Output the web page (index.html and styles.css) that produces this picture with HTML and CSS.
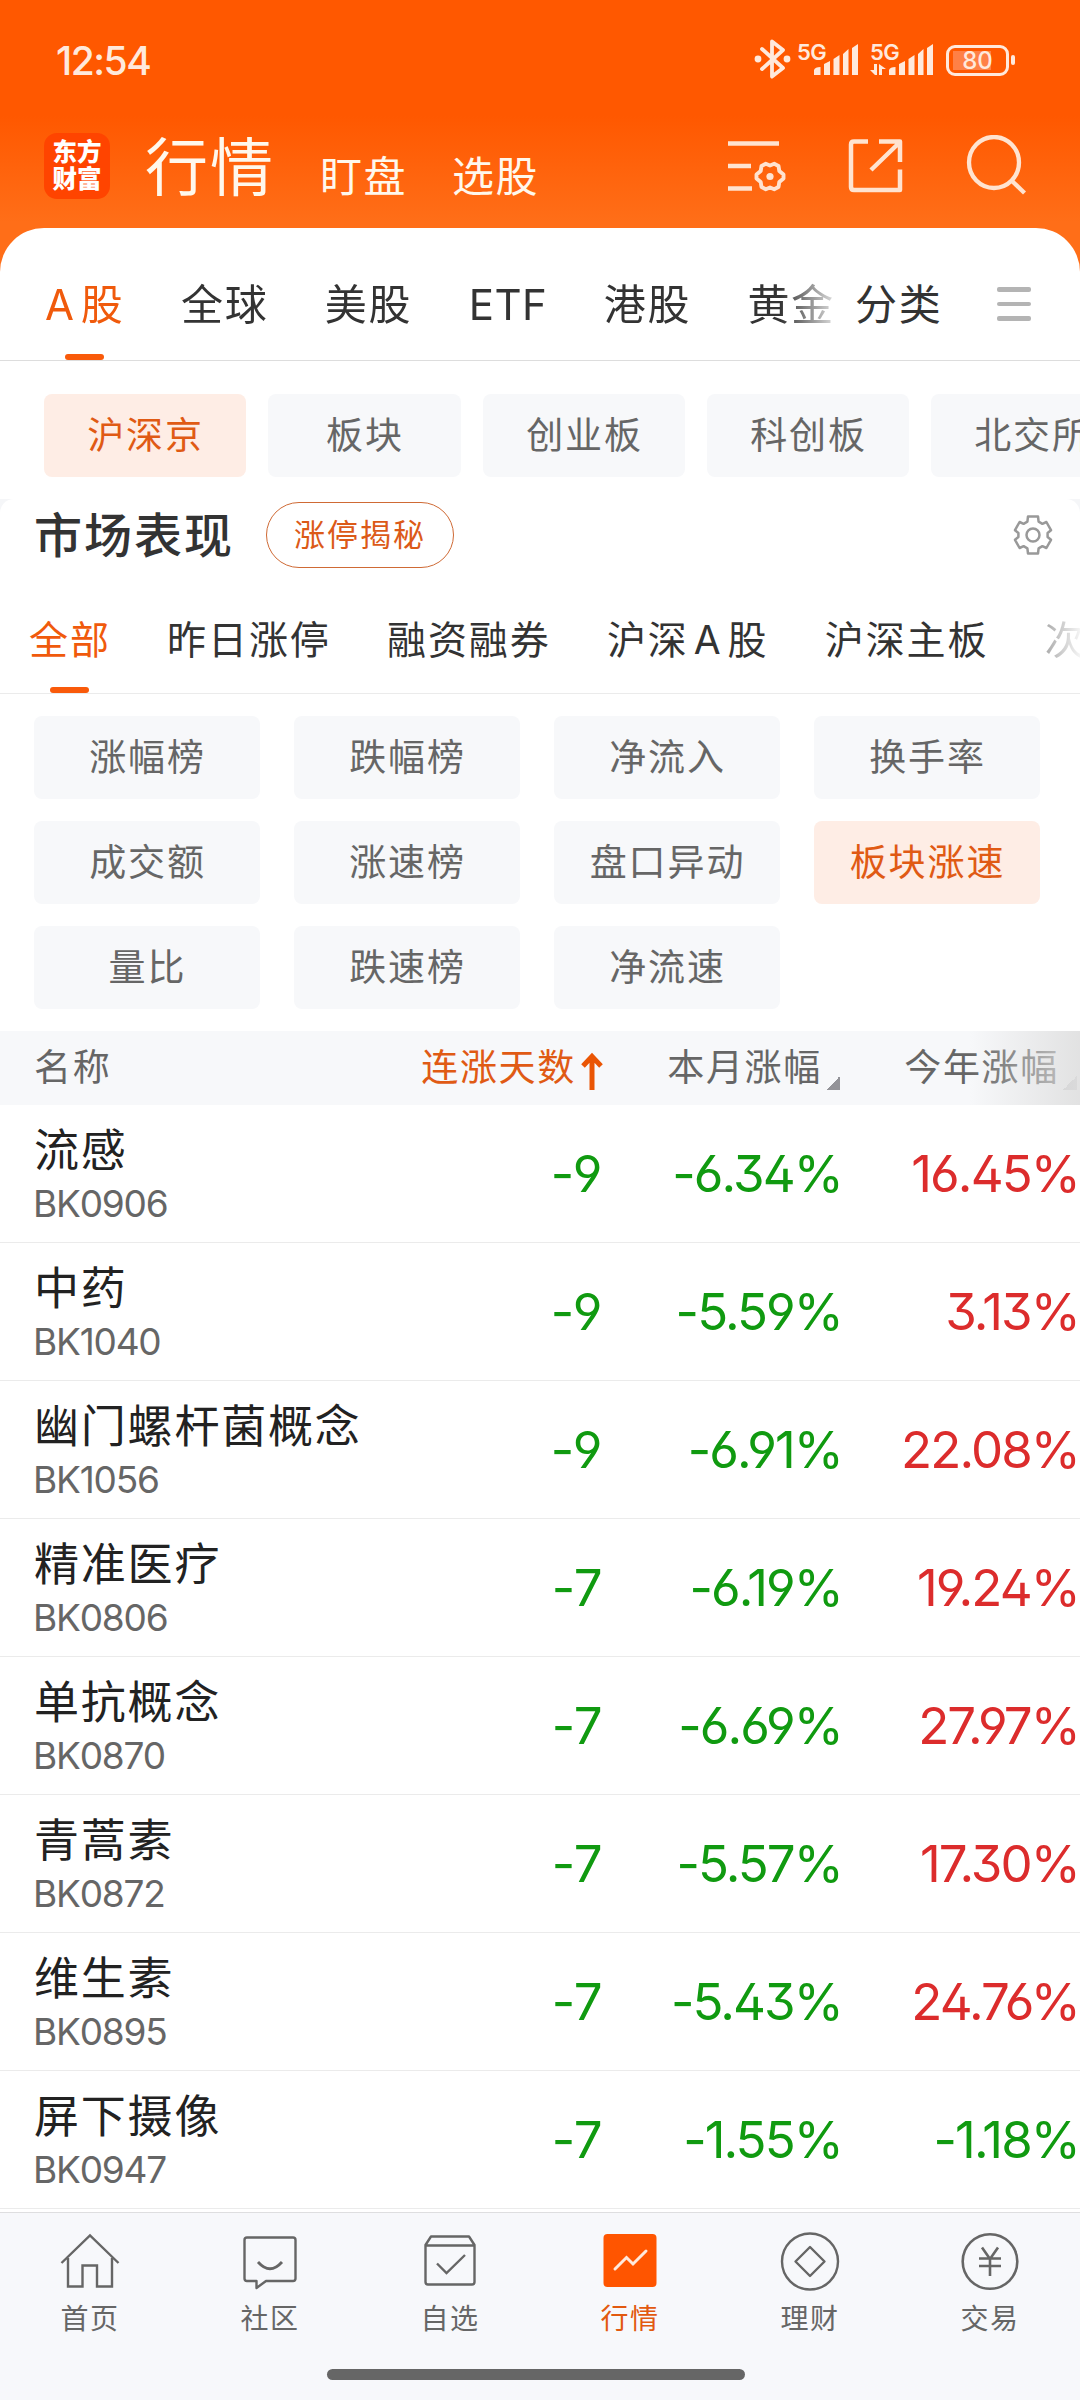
FILE: index.html
```html
<!DOCTYPE html>
<html lang="zh-CN">
<head>
    <meta charset="UTF-8">
    <meta name="viewport" content="width=device-width, initial-scale=1.0">
    <title>行情</title>
    <link rel="stylesheet" href="styles.css">
</head>
<body>

<header class="header">
    <div class="status-bar">
        <span class="clock">12:54</span>
        <div class="status-icons">
            <svg class="bluetooth" width="38" height="40" viewBox="0 0 38 40"><path d="M8 10 L29 29 L18 37.5 V2.500 L29 11 L8 30" fill="none" stroke="#ffe9dc" stroke-width="3.800" stroke-linejoin="round" stroke-linecap="round"/><circle cx="4" cy="20" r="3.400" fill="#ffe9dc"/><circle cx="33" cy="20" r="3.400" fill="#ffe9dc"/></svg>
            <div class="signal">
                <span class="net">5G</span>
                <svg width="66" height="36" viewBox="0 0 66 36"><path d="M20 36v-5q1-3 6.500-3v8zM30 36V25l6-3v14zM39.500 36V20l6-4v20zM49 36V15l5.500-5v26zM58 36V9l6-4v31z" fill="#ffe9dc"/></svg>
            </div>
            <div class="signal second">
                <span class="net">5G</span>
                <svg width="66" height="36" viewBox="0 0 66 36"><path d="M20 36v-5q1-3 6.500-3v8zM30 36V25l6-3v14zM39.500 36V20l6-4v20zM49 36V15l5.500-5v26zM58 36V9l6-4v31zM5 25h3v11H6l-5-5h4zM10 25l7 5h-4v6h-3z" fill="#ffe9dc"/></svg>
            </div>
            <div class="battery"><span>80</span></div>
        </div>
    </div>
    <div class="title-bar">
        <div class="logo">东方<br>财富</div>
        <h1>行情</h1>
        <span class="title-link">盯盘</span>
        <span class="title-link">选股</span>
        <div class="title-icons">
            <svg width="60" height="60" viewBox="0 0 60 60" fill="none" stroke="#ffe3d0" stroke-width="4.500"><path d="M0 8.500h51M0 31h23M0 53.500h24"/><path d="M42 30.500L46.200 28.800L50.500 31L51.300 36L55.500 39.500V43.500L51.300 47L50.500 52L46.200 54.200L42 52.500L37.800 54.200L33.500 52L32.700 47L28.500 43.500V39.500L32.700 36L33.500 31L37.800 28.800Z" stroke-width="3.900" stroke-linejoin="round"/><circle cx="42" cy="41.500" r="3.600" fill="#ffe3d0" stroke="none"/></svg>
            <svg width="58" height="60" viewBox="0 0 58 60" fill="none" stroke="#ffe3d0" stroke-width="4.500"><path d="M20 6.500H6q-3 0-3 3V52q0 3 3 3H52V34.500M31 6.500H52V27M23 35L51 8" stroke-linejoin="round"/></svg>
            <svg width="62" height="60" viewBox="0 0 62 60" fill="none" stroke="#ffe3d0" stroke-width="4.300"><ellipse cx="28" cy="27.500" rx="25" ry="25.500"/><path d="M45.500 45.500L58.500 58"/></svg>
        </div>
    </div>
</header>

<main class="sheet">
    <nav class="market-tabs">
        <div class="market-scroll">
            <span class="tab active">A<i class="thin"></i>股</span>
            <span class="tab">全球</span>
            <span class="tab">美股</span>
            <span class="tab etf">ETF</span>
            <span class="tab">港股</span>
            <span class="tab">黄金</span>
        </div>
        <span class="tab category">分类</span>
        <div class="burger"><i></i><i></i><i></i></div>
    </nav>

    <div class="board-chips">
        <span class="chip active">沪深京</span>
        <span class="chip narrow">板块</span>
        <span class="chip">创业板</span>
        <span class="chip">科创板</span>
        <span class="chip">北交所</span>
    </div>

    <div class="section-wrap">
    <section class="section">
        <div class="section-head">
            <h2>市场表现</h2>
            <span class="pill">涨停揭秘</span>
            <svg class="gear" width="42" height="44" viewBox="0 0 42 44" fill="none" stroke="#999" stroke-width="2.500" stroke-linejoin="round"><path d="M16 3.500H26L26.600 8.600L30.400 10.800L34.400 9L39 17.200L35.600 20V24L39 26.800L34.400 35L30.400 33.200L26.600 35.400L26 40.500H16L15.400 35.400L11.600 33.200L7.600 35L3 26.800L6.400 24V20L3 17.200L7.600 9L11.600 10.800L15.400 8.600Z"/><circle cx="21" cy="22" r="6.500"/></svg>
        </div>

        <nav class="sub-tabs">
            <span class="tab active">全部</span>
            <span class="tab">昨日涨停</span>
            <span class="tab">融资融券</span>
            <span class="tab">沪深<i class="thin"></i>A<i class="thin"></i>股</span>
            <span class="tab">沪深主板</span>
            <span class="tab">次</span>
        </nav>

        <div class="rank-grid">
            <span class="chip">涨幅榜</span>
            <span class="chip">跌幅榜</span>
            <span class="chip">净流入</span>
            <span class="chip">换手率</span>
            <span class="chip">成交额</span>
            <span class="chip">涨速榜</span>
            <span class="chip">盘口异动</span>
            <span class="chip active">板块涨速</span>
            <span class="chip">量比</span>
            <span class="chip">跌速榜</span>
            <span class="chip">净流速</span>
        </div>
    </section>
    </div>

    <div class="table">
        <div class="thead">
            <span class="th-name">名称</span>
            <span class="th sorted">连涨天数<svg width="22" height="40" viewBox="0 0 22 40" fill="none" stroke="#ea5504" stroke-width="5"><path d="M11 39V5M2 15L11 5.500L20 15"/></svg></span>
            <span class="th">本月涨幅<i class="corner"></i></span>
            <span class="th last">今年涨幅<i class="corner"></i></span>
        </div>
        <div class="row">
            <div class="stock"><b>流感</b><small>BK0906</small></div>
            <span class="num days down">-9</span>
            <span class="num down">-6.34%</span>
            <span class="num up">16.45%</span>
        </div>
        <div class="row">
            <div class="stock"><b>中药</b><small>BK1040</small></div>
            <span class="num days down">-9</span>
            <span class="num down">-5.59%</span>
            <span class="num up">3.13%</span>
        </div>
        <div class="row">
            <div class="stock"><b>幽门螺杆菌概念</b><small>BK1056</small></div>
            <span class="num days down">-9</span>
            <span class="num down">-6.91%</span>
            <span class="num up">22.08%</span>
        </div>
        <div class="row">
            <div class="stock"><b>精准医疗</b><small>BK0806</small></div>
            <span class="num days down">-7</span>
            <span class="num down">-6.19%</span>
            <span class="num up">19.24%</span>
        </div>
        <div class="row">
            <div class="stock"><b>单抗概念</b><small>BK0870</small></div>
            <span class="num days down">-7</span>
            <span class="num down">-6.69%</span>
            <span class="num up">27.97%</span>
        </div>
        <div class="row">
            <div class="stock"><b>青蒿素</b><small>BK0872</small></div>
            <span class="num days down">-7</span>
            <span class="num down">-5.57%</span>
            <span class="num up">17.30%</span>
        </div>
        <div class="row">
            <div class="stock"><b>维生素</b><small>BK0895</small></div>
            <span class="num days down">-7</span>
            <span class="num down">-5.43%</span>
            <span class="num up">24.76%</span>
        </div>
        <div class="row">
            <div class="stock"><b>屏下摄像</b><small>BK0947</small></div>
            <span class="num days down">-7</span>
            <span class="num down">-1.55%</span>
            <span class="num down">-1.18%</span>
        </div>
    </div>
</main>

<footer class="bottom">
    <nav class="bottom-nav">
        <div class="nav-item">
            <svg width="60" height="60" viewBox="0 0 60 60" fill="none" stroke="#666" stroke-width="2.400"><path d="M1.500 31L30 3.500L58.500 31M8 26V54.500H22.500V33.500H37V54.500H52V26"/></svg>
            <span>首页</span>
        </div>
        <div class="nav-item">
            <svg width="60" height="60" viewBox="0 0 60 60" fill="none" stroke="#666" stroke-width="2.400"><path d="M7 5.500H53q2.500 0 2.500 2.500V46.500q0 2.500-2.500 2.500H26L16.500 56V49H7q-2.500 0-2.500-2.500V8q0-2.500 2.500-2.500z" stroke-linejoin="round"/><path d="M18 30Q30 43.500 42 30" stroke-width="2.800"/></svg>
            <span>社区</span>
        </div>
        <div class="nav-item">
            <svg width="60" height="60" viewBox="0 0 60 60" fill="none" stroke="#666" stroke-width="2.400"><path d="M11 4.500H49L54.500 13V50q0 2.500-2.500 2.500H8q-2.500 0-2.500-2.500V13zM5.500 13.500H54.500" stroke-linejoin="round"/><path d="M17 31.500L26.500 41L45 23"/></svg>
            <span>自选</span>
        </div>
        <div class="nav-item active">
            <svg width="60" height="60" viewBox="0 0 60 60" fill="none"><rect x="3.500" y="2" width="53" height="53" rx="4" fill="#ff5500"/><path d="M15 37L26.500 25.500L33 32L46 19" stroke="#ffe9dc" stroke-width="3" stroke-linecap="round"/></svg>
            <span>行情</span>
        </div>
        <div class="nav-item">
            <svg width="60" height="60" viewBox="0 0 60 60" fill="none" stroke="#666" stroke-width="2.400"><ellipse cx="30" cy="29.500" rx="28" ry="28"/><path d="M30 15L44.500 29.500L30 44L15.500 29.500Z" stroke-linejoin="round"/></svg>
            <span>理财</span>
        </div>
        <div class="nav-item">
            <svg width="60" height="60" viewBox="0 0 60 60" fill="none" stroke="#666" stroke-width="2.600"><circle cx="30" cy="29.500" r="27.300"/><path d="M22 15.500L30 27L38 15.500M19 26.500H41M19 34H41M30 27V44"/></svg>
            <span>交易</span>
        </div>
    </nav>
    <div class="home-bar"></div>
</footer>

</body>
</html>
```
FILE: styles.css
```css
*{box-sizing:border-box;}
body{margin:0;width:1080px;height:2400px;overflow:hidden;display:flex;flex-direction:column;background:#fff;font-family:Inter,"Noto Sans CJK SC",sans-serif;color:#333;font-weight:400;}
i{font-style:normal;}
svg{display:block;flex:none;}

/* header */
.header{height:272px;flex:none;background:linear-gradient(#ff5800 0,#ff5800 116px,#ff6e18 222px,#ff6e18 100%);}
.status-bar{height:118px;display:flex;justify-content:space-between;align-items:flex-start;padding:0 65px 0 56px;}
.clock{font-size:39px;line-height:48px;margin-top:37px;font-weight:500;letter-spacing:-1.500px;color:#ffe9dc;}
.status-icons{display:flex;margin-top:39px;height:40px;}
.bluetooth{margin-right:4px;}
.signal{position:relative;width:75px;}
.signal.second{width:77px;margin-left:-2px;}
.signal svg{margin-left:-2px;}
.signal.second svg{margin-left:0;}
.net{position:absolute;left:1px;top:2px;font-size:22px;line-height:22px;font-weight:600;letter-spacing:-0.500px;color:#ffe9dc;}
.battery{position:relative;width:63px;height:31px;margin-top:6px;margin-right:6px;border:3px solid #ffe9dc;border-radius:9px;background:linear-gradient(90deg,#ff8046 38px,transparent 38px) 4px 3px/100% 19px no-repeat;text-align:center;color:#ffe9dc;font-size:24px;line-height:25px;font-weight:500;}
.battery::after{content:"";position:absolute;right:-9px;top:7px;width:4px;height:10px;border-radius:2px;background:#ffe9dc;}
.title-bar{height:110px;display:flex;align-items:flex-start;padding:0 52px 0 44px;color:#fff8ec;}
.logo{width:66px;height:66px;margin-top:15px;border-radius:13px;background:#ff4400;color:#fff;font-size:24.500px;line-height:27px;font-weight:900;text-align:center;padding-top:6px;}
h1{margin:11px 0 0 35px;font-size:63px;line-height:76px;font-weight:400;letter-spacing:2px;}
.title-link{font-size:42px;line-height:50px;margin:34px 0 0 45px;letter-spacing:1.500px;}
.title-icons{margin-left:auto;margin-top:17px;display:flex;gap:60px;}

/* white sheet */
.sheet{flex:none;height:1984px;margin-top:-44px;background:#fff;border-radius:44px 44px 0 0;overflow:hidden;}
.market-tabs{height:133px;display:flex;align-items:center;border-bottom:1px solid #ddd;padding-top:20px;}
.market-scroll{width:834px;display:flex;gap:56.300px;padding-left:45px;overflow:hidden;-webkit-mask-image:linear-gradient(90deg,#000 780px,transparent 845px);mask-image:linear-gradient(90deg,#000 780px,transparent 845px);}
.tab{position:relative;flex:none;white-space:nowrap;}
.market-tabs .tab{font-size:42px;line-height:114px;height:112px;letter-spacing:1.800px;}
.market-tabs .etf{letter-spacing:0.500px;}
.market-tabs .category{margin-left:21px;}
.thin{display:inline-block;width:5px;}
.tab.active{color:#f05a0c;}
.tab.active::after{content:"";position:absolute;left:50%;bottom:0;width:39px;height:6px;margin-left:-20px;border-radius:3px;background:#f95a0a;}
.burger{margin-left:54px;display:flex;flex-direction:column;gap:10px;}
.burger i{width:34px;height:4.500px;border-radius:2px;background:#b4b4b4;}
.chip{display:block;flex:none;width:202px;height:83px;border-radius:8px;background:#f7f8fa;color:#666;font-size:37px;line-height:84px;letter-spacing:1.900px;text-indent:1px;text-align:center;}
.chip.active{background:#feede5;color:#e05a14;}
.board-chips{display:flex;gap:22px;padding:33px 0 22px 44px;}
.chip.narrow{width:193px;}

/* market performance */
.section-wrap{background:#f5f6f8;}
.section{background:#fff;border-radius:14px 14px 0 0;}
.section-head{height:94px;display:flex;align-items:flex-start;padding:3px 26px 0 34px;}
h2{margin:0;font-size:48px;line-height:67px;font-weight:500;letter-spacing:2px;}
.pill{margin-left:32px;width:188px;height:66px;border:1.500px solid #cf6a35;border-radius:33px;color:#dc5a18;font-size:31px;line-height:63px;letter-spacing:2px;text-align:center;}
.gear{margin-left:auto;margin-top:11px;}
.sub-tabs{height:101px;display:flex;gap:56.300px;padding-left:29px;border-bottom:1px solid #ebebeb;overflow:hidden;}
.sub-tabs .tab{font-size:39px;line-height:94px;height:100px;letter-spacing:1.900px;}
.sub-tabs .tab:last-child{color:transparent;background:linear-gradient(90deg,#aaa,#fff 40px);-webkit-background-clip:text;background-clip:text;}
.rank-grid{display:grid;grid-template-columns:repeat(4,226px);gap:22px 34px;padding:22px 34px;}
.rank-grid .chip{width:226px;}

/* table */
.thead,.row{display:grid;grid-template-columns:364px 239px 237px 237px;}
.thead{height:74px;position:relative;background:#f7f8fa;color:#666;font-size:37px;line-height:74px;letter-spacing:1.700px;}
.thead::after{content:"";position:absolute;right:0;top:0;width:110px;height:74px;background:linear-gradient(90deg,rgba(222,222,222,0),rgba(222,222,222,0.85));}
.th-name{padding-left:34px;}
.th{display:flex;justify-content:flex-end;white-space:nowrap;}
.th svg{margin:20px 0 0 5px;}
.th.sorted{color:#e05a14;}
.corner{width:14px;height:14px;margin:45px 0 0 4px;background:linear-gradient(135deg,transparent 50%,#939398 50%);}
.last .corner{opacity:.5;}
.row{height:138px;align-items:center;border-bottom:1px solid #ebebeb;}
.stock{padding-left:34px;white-space:nowrap;color:#222;}
.stock b{display:block;font-size:45px;line-height:60px;font-weight:400;letter-spacing:1.800px;padding-top:1px;}
.stock small{display:block;font-size:37px;line-height:46px;color:#666;margin-left:-1px;letter-spacing:-1.200px;}
.num{margin-right:-2px;padding-top:1px;text-align:right;font-size:51px;line-height:60px;letter-spacing:-1.900px;font-feature-settings:"ss01";}
.num.days{margin-right:1px;letter-spacing:-0.500px;}
.down{color:#109a10;}
.up{color:#dc2c2c;}

/* bottom bar */
.bottom{height:188px;flex:none;border-top:1px solid #dedee0;background:#f7f8fb;}
.bottom-nav{display:flex;padding-top:19px;}
.nav-item{width:180px;display:flex;flex-direction:column;align-items:center;color:#666;font-size:28px;letter-spacing:1.500px;}
.nav-item span{line-height:40px;margin-top:7px;}
.nav-item.active{color:#e2590f;}
.home-bar{width:418px;height:11px;margin:30px 0 0 327px;border-radius:6px;background:#666;}
```
